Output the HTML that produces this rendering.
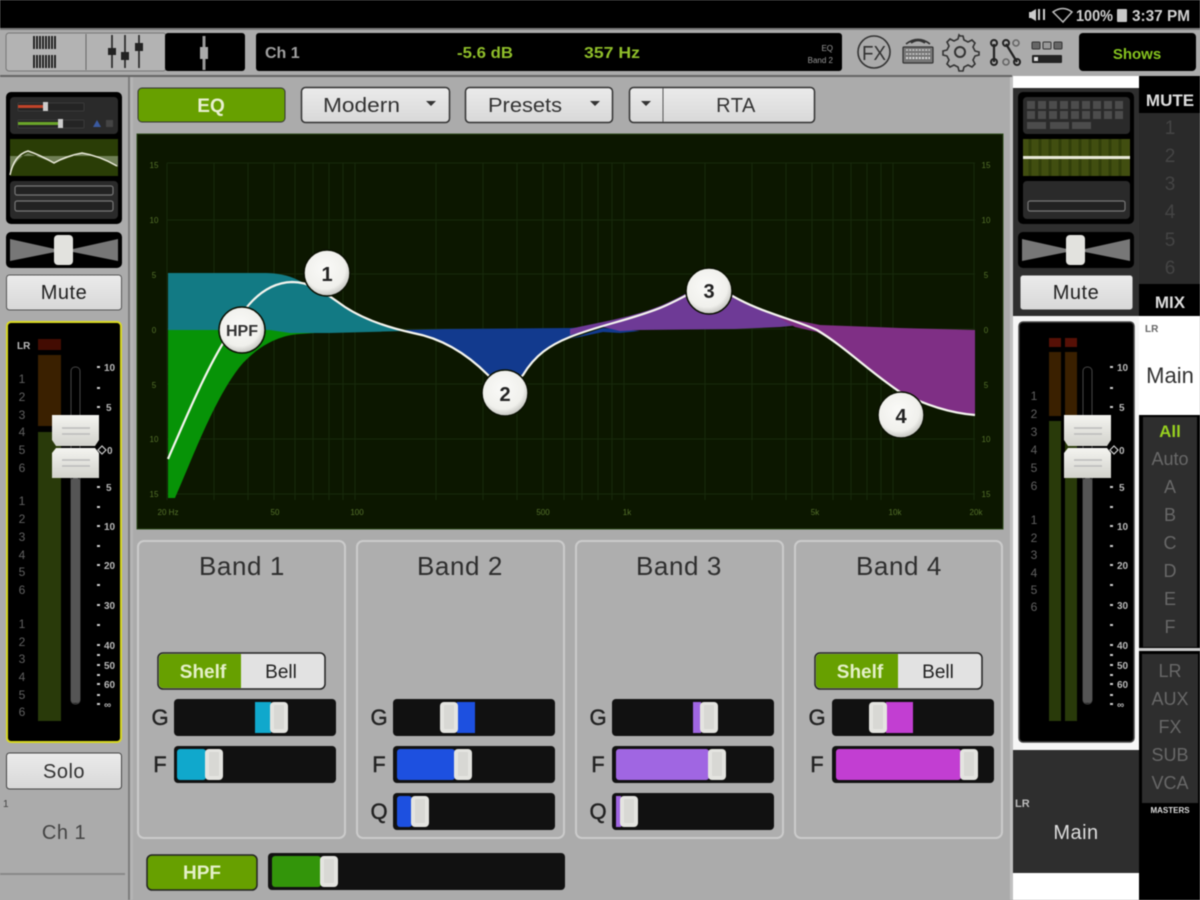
<!DOCTYPE html>
<html><head><meta charset="utf-8"><style>
html,body{margin:0;padding:0;background:#ababab;width:1200px;height:900px;overflow:hidden}
svg{display:block;filter:blur(.5px)}
text{font-family:"Liberation Sans",sans-serif}
</style></head><body>
<svg width="1200" height="900" viewBox="0 0 1200 900" xmlns="http://www.w3.org/2000/svg">
<defs>
<linearGradient id="btn" x1="0" y1="0" x2="0" y2="1"><stop offset="0" stop-color="#ebebeb"/><stop offset="1" stop-color="#d8d8d8"/></linearGradient>
<linearGradient id="cap" x1="0" y1="0" x2="0" y2="1"><stop offset="0" stop-color="#f4f4f0"/><stop offset="1" stop-color="#d2d2cc"/></linearGradient>
<radialGradient id="ball" cx=".45" cy=".4" r=".6"><stop offset="0" stop-color="#fafaf8"/><stop offset=".75" stop-color="#f0f0ec"/><stop offset="1" stop-color="#c4c4c0"/></radialGradient>
<g id="thumb"><rect x="0" y="0" width="18" height="31" rx="4" fill="#e4e4e0"/><rect x="4" y="3" width="10" height="24" fill="#d8d8d4"/></g>
<g id="cap2">
<path d="M0 0H47V25L43 31H4L0 25Z" fill="url(#cap)"/><path d="M10 13H38M10 19H38" stroke="#bbb" stroke-width="1.5"/>
<path d="M0 38L4 33H43L47 38V63H0Z" fill="url(#cap)"/><path d="M10 45H38M10 51H38" stroke="#bbb" stroke-width="1.5"/>
</g>
<g id="scale" fill="#b8b8b8" font-size="10" font-weight="bold">
<text x="-1" y="371">10</text><text x="1" y="411">5</text><text x="1" y="491">5</text><text x="-1" y="530">10</text><text x="-1" y="569">20</text><text x="-1" y="609">30</text><text x="-1" y="649">40</text><text x="-1" y="669">50</text><text x="-1" y="688">60</text><text x="-1" y="708">∞</text>
<path d="M-8 367h3M-8 388h3M-8 407h3M-8 487h3M-8 507h3M-8 526h3M-8 546h3M-8 565h3M-8 585h3M-8 605h3M-8 625h3M-8 645h3M-8 655h3M-8 665h3M-8 675h3M-8 684h3M-8 695h3M-8 704h3" stroke="#ccc" stroke-width="2"/>
</g>
<g id="bow"><path d="M4 7L49 17V20L4 29Z" fill="#777"/><path d="M112 7L67 17V20L112 29Z" fill="#777"/></g>
</defs>

<!-- base -->
<rect width="1200" height="900" fill="#ababab"/>
<rect width="1200" height="28" fill="#000"/>
<rect y="28" width="1200" height="2" fill="#7a7a7a"/>
<rect y="75" width="1012" height="2" fill="#666"/>
<rect x="128" y="77" width="2" height="823" fill="#7d7d7d"/>
<rect x="130" y="77" width="3" height="823" fill="#b4b4b4"/>
<rect x="1010" y="77" width="3" height="823" fill="#c0c0c0"/>

<!-- status bar -->
<path d="M1031 12l5-3v12l-5-3h-2v-6z" fill="#ccc"/><path d="M1039 9v11M1044 9v11" stroke="#ccc" stroke-width="2"/>
<path d="M1053 12q10-7 19 0l-9 10z" fill="none" stroke="#bbb" stroke-width="1.500"/>
<text x="1076" y="21" font-size="16" fill="#cfcfcf" font-weight="bold" textLength="37" lengthAdjust="spacingAndGlyphs">100%</text>
<rect x="1117" y="9" width="10" height="13" rx="1" fill="#c8c8c8"/>
<text x="1132" y="21" font-size="16" fill="#cfcfcf" font-weight="bold" textLength="58" lengthAdjust="spacingAndGlyphs">3:37 PM</text>

<!-- top tabs -->
<rect x="6" y="33" width="160" height="38" rx="3" fill="#b3b3b3" stroke="#777" stroke-width="1"/>
<path d="M86 34v36" stroke="#666"/>
<rect x="165" y="33" width="80" height="38" rx="3" fill="#000"/>
<path d="M34 36v13M37 36v13M40 36v13M43 36v13M46 36v13M49 36v13M52 36v13M55 36v13M34 55v13M37 55v13M40 55v13M43 55v13M46 55v13M49 55v13M52 55v13M55 55v13" stroke="#111" stroke-width="1.700"/>
<path d="M112 35v33M125 35v33M139 35v33" stroke="#222" stroke-width="1.600"/>
<rect x="108" y="48" width="8" height="7" fill="#222"/><rect x="121" y="52" width="8" height="8" fill="#222"/><rect x="135" y="43" width="8" height="8" fill="#222"/>
<path d="M204 36v34" stroke="#999" stroke-width="3"/><rect x="200" y="47" width="8" height="12" fill="#aaa"/>

<!-- display -->
<rect x="256" y="33" width="586" height="38" rx="3" fill="#000"/>
<text x="265" y="58" font-size="16" fill="#a0a0a0" font-weight="bold">Ch 1</text>
<text x="457" y="58" font-size="16" fill="#8fbe2a" textLength="56" font-weight="bold" lengthAdjust="spacingAndGlyphs">-5.6 dB</text>
<text x="584" y="58" font-size="16" fill="#8fbe2a" textLength="56" font-weight="bold" lengthAdjust="spacingAndGlyphs">357 Hz</text>
<text x="833" y="51" font-size="8" fill="#999" text-anchor="end">EQ</text>
<text x="833" y="63" font-size="8" fill="#999" text-anchor="end">Band 2</text>

<!-- icons -->
<circle cx="874" cy="52" r="16" fill="none" stroke="#333" stroke-width="1.600"/>
<text x="874" y="60" font-size="20" fill="#333" text-anchor="middle" textLength="24" lengthAdjust="spacingAndGlyphs">FX</text>
<g fill="none" stroke="#333">
<rect x="903" y="47" width="30" height="16" rx="1" fill="#777" stroke-width="1.200"/>
<path d="M906 50h24M906 54h24" stroke="#ddd" stroke-width="1.200" stroke-dasharray="2 1.200"/>
<path d="M906 58h24" stroke="#ddd" stroke-width="2" stroke-dasharray="2 1.200"/>
<path d="M906 44q12-9 24 0M911 43q7-5 14 0" stroke-width="1.600"/>
<path d="M960 37l3 0 1 4 4 2 4-2 3 3-2 4 2 4 4 1 0 3-4 1-2 4 2 4-3 3-4-2-4 2-1 4h-4l-1-4-4-2-4 2-3-3 2-4-2-4-4-1v-4l4-1 2-4-2-4 3-3 4 2 4-2 1-4z" stroke-width="1.600" transform="translate(0,-1)"/>
<circle cx="960" cy="52" r="5" stroke-width="2"/>
<path d="M994 44v18M1006 44l11 18" stroke="#222" stroke-width="2.200"/>
<circle cx="994" cy="43" r="3" stroke="#222" stroke-width="2"/><circle cx="994" cy="62" r="3" stroke="#222" stroke-width="2"/>
<circle cx="1006" cy="43" r="3" stroke="#222" stroke-width="2"/><circle cx="1016" cy="43" r="3" stroke="#666" stroke-width="1.600"/>
<circle cx="1006" cy="62" r="3" stroke="#666" stroke-width="1.600"/><circle cx="1017" cy="62" r="3" stroke="#222" stroke-width="2"/>
</g>
<rect x="1032" y="42" width="8" height="7" rx="1" fill="#666" stroke="#333"/><rect x="1043" y="42" width="8" height="7" rx="1" fill="#999" stroke="#333"/><rect x="1054" y="42" width="8" height="7" rx="1" fill="#666" stroke="#333"/>
<rect x="1032" y="55" width="30" height="8" rx="1" fill="#222"/><rect x="1034" y="57" width="4" height="4" fill="#ddd"/>

<rect x="1079" y="33" width="117" height="38" rx="4" fill="#000"/>
<text x="1137" y="59" font-size="15" fill="#86c41f" font-weight="bold" text-anchor="middle">Shows</text>

<!-- left mini panels -->
<rect x="6" y="92" width="116" height="132" rx="5" fill="#000"/>
<rect x="10" y="97" width="108" height="37" rx="4" fill="#2a2a2a"/>
<rect x="18" y="103" width="66" height="8" rx="1" fill="#242424" stroke="#3a3a3a"/><rect x="18" y="105" width="26" height="3" fill="#c0442a"/><rect x="43" y="102" width="5" height="9" fill="#ccc"/>
<rect x="18" y="120" width="66" height="8" rx="1" fill="#242424" stroke="#3a3a3a"/><rect x="18" y="122" width="41" height="3" fill="#6aa52a"/><rect x="58" y="119" width="5" height="9" fill="#ccc"/>
<path d="M97 120l4 7h-8z" fill="#3a5aa0"/><rect x="106" y="120" width="7" height="7" fill="#444"/>
<rect x="10" y="139" width="108" height="37" fill="#2a3d06"/>
<path d="M10 175Q14 160 28 153L54 163 82 153 100 158 118 167V156H10Z" fill="#6f7f55"/>
<path d="M10 175Q14 155 28 151Q40 155 54 163Q66 156 82 153Q100 156 117 166" fill="none" stroke="#e8e8d8" stroke-width="1.500"/>
<rect x="10" y="181" width="108" height="38" rx="4" fill="#2a2a2a"/>
<rect x="15" y="186" width="98" height="9" rx="2" fill="#222" stroke="#777" stroke-width="1.200"/>
<rect x="15" y="201" width="98" height="10" rx="2" fill="#222" stroke="#777" stroke-width="1.200"/>

<rect x="6" y="232" width="116" height="36" rx="5" fill="#000"/>
<use href="#bow" x="6" y="232"/>
<rect x="54" y="235" width="19" height="30" rx="4" fill="#e2e2de"/>

<rect x="6.500" y="275" width="115" height="35" rx="3" fill="url(#btn)" stroke="#555"/>
<text x="64" y="299" font-size="20" fill="#222" text-anchor="middle" letter-spacing=".5">Mute</text>

<!-- left fader -->
<rect x="7" y="322" width="114" height="420" rx="4" fill="#000" stroke="#d8d820" stroke-width="2"/>
<text x="17" y="349" font-size="10" fill="#bbb" font-weight="bold">LR</text>
<rect x="38" y="339" width="23" height="11" fill="#430c02"/>
<rect x="38" y="355" width="23" height="71" fill="#3a2000"/>
<rect x="38" y="432" width="23" height="289" fill="#293a0a"/>
<g font-size="12" fill="#606060" text-anchor="middle">
<text x="22" y="383">1</text><text x="22" y="401">2</text><text x="22" y="419">3</text><text x="22" y="436">4</text><text x="22" y="454">5</text><text x="22" y="472">6</text>
<text x="22" y="505">1</text><text x="22" y="523">2</text><text x="22" y="541">3</text><text x="22" y="559">4</text><text x="22" y="576">5</text><text x="22" y="594">6</text>
<text x="22" y="628">1</text><text x="22" y="646">2</text><text x="22" y="663">3</text><text x="22" y="681">4</text><text x="22" y="699">5</text><text x="22" y="716">6</text>
</g>
<rect x="71" y="367" width="9" height="337" rx="4" fill="#000" stroke="#444"/>
<rect x="71" y="478" width="9" height="225" rx="3" fill="#555"/>
<use href="#scale" x="105" y="0"/>
<path d="M98 450l4-4 4 4-4 4z" fill="none" stroke="#ccc" stroke-width="1.200"/>
<text x="107" y="454" font-size="10" fill="#b8b8b8" font-weight="bold">0</text>
<use href="#cap2" x="52" y="415"/>

<rect x="6.500" y="753" width="115" height="36" rx="3" fill="url(#btn)" stroke="#444"/>
<text x="64" y="778" font-size="20" fill="#333" text-anchor="middle" letter-spacing=".5">Solo</text>
<text x="3" y="807" font-size="10" fill="#444">1</text>
<text x="64" y="839" font-size="20" fill="#444" text-anchor="middle" letter-spacing=".5">Ch 1</text>
<rect y="873" width="125" height="2" fill="#888"/>

<!-- eq buttons -->
<rect x="138" y="88" width="147" height="34" rx="4" fill="#67a000" stroke="#333"/>
<text x="211" y="112" font-size="19" fill="#e8f0d0" text-anchor="middle" font-weight="bold">EQ</text>
<rect x="301.500" y="87.500" width="148" height="35" rx="4" fill="url(#btn)" stroke="#333" stroke-width="1.500"/>
<text x="323" y="112" font-size="20" fill="#333" textLength="77" lengthAdjust="spacingAndGlyphs">Modern</text>
<path d="M426 101h10l-5 5z" fill="#333"/>
<rect x="465.500" y="87.500" width="147" height="35" rx="4" fill="url(#btn)" stroke="#333" stroke-width="1.500"/>
<text x="488" y="112" font-size="20" fill="#333" textLength="74" lengthAdjust="spacingAndGlyphs">Presets</text>
<path d="M590 101h10l-5 5z" fill="#333"/>
<rect x="629.500" y="87.500" width="185" height="35" rx="4" fill="url(#btn)" stroke="#333" stroke-width="1.500"/>
<path d="M663 88v34" stroke="#555"/>
<path d="M641 101h10l-5 5z" fill="#333"/>
<text x="736" y="112" font-size="20" fill="#333" text-anchor="middle" letter-spacing=".5">RTA</text>

<!-- graph -->
<rect x="137" y="134" width="866" height="395" fill="#0c1700"/>
<rect x="137" y="134" width="866" height="395" fill="none" stroke="#2c4a1a" stroke-width="1"/>
<g stroke="#172a0b" stroke-width="1" fill="none">
<path d="M167 163V500M214 163V500M248 163V500M274 163V500M295 163V500M313 163V500M329 163V500M343 163V500M355 163V500M436 163V500M483 163V500M517 163V500M543 163V500M564 163V500M582 163V500M598 163V500M612 163V500M624 163V500M705 163V500M752 163V500M786 163V500M812 163V500M833 163V500M851 163V500M867 163V500M881 163V500M893 163V500M974 163V500"/>
<path d="M167 163H975M167 220H975M167 274H975M167 329H975M167 384H975M167 439H975M167 494H975"/>
</g>
<g font-size="8" fill="#55722a" text-anchor="middle">
<text x="154" y="168">15</text><text x="154" y="223">10</text><text x="154" y="278">5</text><text x="154" y="333">0</text><text x="154" y="388">5</text><text x="154" y="442">10</text><text x="154" y="497">15</text>
<text x="986" y="168">15</text><text x="986" y="223">10</text><text x="986" y="278">5</text><text x="986" y="333">0</text><text x="986" y="388">5</text><text x="986" y="442">10</text><text x="986" y="497">15</text>
<text x="168" y="515">20 Hz</text><text x="275" y="515">50</text><text x="357" y="515">100</text><text x="543" y="515">500</text><text x="627" y="515">1k</text><text x="815" y="515">5k</text><text x="895" y="515">10k</text><text x="976" y="515">20k</text>
</g>
<!-- fills -->
<path d="M168 330V498H175C190 465 215 395 243 363C260 345 280 335 300 334L330 332 345 330Z" fill="#079307"/>
<path d="M168 330V273H263C280 273 290 276 300 281L327 295C335 298 340 303 345 307C365 320 385 326 405 331L330 333 290 333 270 330Z" fill="#127a84"/>
<path d="M400 330L445 329 570 328 603 326 570 337C550 345 535 355 523 375L505 395 488 375C465 352 440 338 413 333Z" fill="#123a8e"/>
<path d="M570 339L603 328 640 331 620 333 603 332Z" fill="#123a8e"/>
<path d="M570 329C600 322 630 318 660 306C680 298 695 287 709 284C720 286 728 292 740 299C765 312 785 318 800 325L780 327 735 329 640 330 620 331 603 327 570 335Z" fill="#6e3a96"/>
<path d="M770 313L795 320 820 325 900 328 975 330V415C950 413 925 405 900 392C870 372 845 347 817 332L795 327Z" fill="#7f2f85"/>
<!-- curve -->
<path d="M168 459C185 420 205 372 225 340C240 315 258 283 292 282C312 282 325 293 345 307C365 320 390 328 413 333C440 338 465 352 488 375L505 393 523 375C535 355 550 345 570 337C600 325 630 320 660 308C680 300 695 289 709 286C720 288 728 294 740 300C765 313 795 320 817 330C845 347 870 372 900 392C925 405 950 413 975 415" fill="none" stroke="#f4f4ee" stroke-width="2.200" stroke-linejoin="round"/>
<!-- nodes -->
<g fill="url(#ball)" stroke="#0a1002" stroke-width="1.500">
<circle cx="327" cy="273" r="23"/><circle cx="242" cy="330" r="23"/><circle cx="505" cy="393" r="23"/><circle cx="709" cy="291" r="23"/><circle cx="901" cy="415" r="23"/>
</g>
<g fill="#222" text-anchor="middle" font-weight="bold">
<text x="327" y="281" font-size="20">1</text>
<text x="242" y="336" font-size="16" fill="#333">HPF</text>
<text x="505" y="401" font-size="20">2</text>
<text x="709" y="298" font-size="20">3</text>
<text x="901" y="423" font-size="20">4</text>
</g>

<!-- band panels -->
<g fill="#aeaeae" stroke="#cbcbcb" stroke-width="2">
<rect x="138" y="541" width="207" height="297" rx="6"/>
<rect x="357" y="541" width="207" height="297" rx="6"/>
<rect x="576" y="541" width="207" height="297" rx="6"/>
<rect x="795" y="541" width="207" height="297" rx="6"/>
</g>
<g font-size="26" fill="#2e2e2e" text-anchor="middle" letter-spacing=".6">
<text x="242" y="575">Band 1</text><text x="460" y="575">Band 2</text><text x="679" y="575">Band 3</text><text x="899" y="575">Band 4</text>
</g>

<!-- shelf/bell -->
<rect x="158" y="653" width="167" height="36" rx="5" fill="#e2e2e2" stroke="#222" stroke-width="1.500"/>
<path d="M241 654H163a4 4 0 0 0-4 4v26a4 4 0 0 0 4 4h78z" fill="#67a000"/>
<text x="203" y="678" font-size="19" fill="#e4f0c8" text-anchor="middle" font-weight="bold">Shelf</text>
<text x="281" y="678" font-size="19" fill="#222" text-anchor="middle">Bell</text>
<rect x="815" y="653" width="167" height="36" rx="5" fill="#e2e2e2" stroke="#222" stroke-width="1.500"/>
<path d="M898 654H820a4 4 0 0 0-4 4v26a4 4 0 0 0 4 4h78z" fill="#67a000"/>
<text x="860" y="678" font-size="19" fill="#e4f0c8" text-anchor="middle" font-weight="bold">Shelf</text>
<text x="938" y="678" font-size="19" fill="#222" text-anchor="middle">Bell</text>

<!-- slider tracks -->
<g fill="#111">
<rect x="174" y="699" width="162" height="37" rx="4"/><rect x="174" y="746" width="162" height="37" rx="4"/>
<rect x="393" y="699" width="162" height="37" rx="4"/><rect x="393" y="746" width="162" height="37" rx="4"/><rect x="393" y="793" width="162" height="37" rx="4"/>
<rect x="612" y="699" width="162" height="37" rx="4"/><rect x="612" y="746" width="162" height="37" rx="4"/><rect x="612" y="793" width="162" height="37" rx="4"/>
<rect x="832" y="699" width="162" height="37" rx="4"/><rect x="832" y="746" width="162" height="37" rx="4"/>
<rect x="268" y="853" width="297" height="37" rx="4"/>
</g>
<rect x="255" y="702" width="16" height="31" fill="#10a8cc"/><rect x="177" y="749" width="29" height="31" rx="3" fill="#10a8cc"/>
<rect x="457" y="702" width="18" height="31" fill="#1d50e0"/><rect x="397" y="749" width="58" height="31" rx="3" fill="#1d50e0"/><rect x="397" y="796" width="15" height="31" rx="3" fill="#1d50e0"/>
<rect x="693" y="702" width="8" height="31" fill="#a066e2"/><rect x="616" y="749" width="93" height="31" rx="3" fill="#a066e2"/><rect x="616" y="796" width="5" height="31" fill="#a066e2"/>
<rect x="886" y="702" width="27" height="31" fill="#c23ed2"/><rect x="836" y="749" width="125" height="31" rx="3" fill="#c23ed2"/>
<rect x="272" y="856" width="49" height="31" rx="3" fill="#33950a"/>
<use href="#thumb" x="270" y="702"/><use href="#thumb" x="205" y="749"/>
<use href="#thumb" x="440" y="702"/><use href="#thumb" x="454" y="749"/><use href="#thumb" x="411" y="796"/>
<use href="#thumb" x="700" y="702"/><use href="#thumb" x="708" y="749"/><use href="#thumb" x="620" y="796"/>
<use href="#thumb" x="869" y="702"/><use href="#thumb" x="960" y="749"/>
<use href="#thumb" x="320" y="856"/>
<g font-size="22" fill="#222" stroke="#222" stroke-width=".4" text-anchor="middle">
<text x="160" y="725">G</text><text x="160" y="772">F</text>
<text x="379" y="725">G</text><text x="379" y="772">F</text><text x="379" y="819">Q</text>
<text x="598" y="725">G</text><text x="598" y="772">F</text><text x="598" y="819">Q</text>
<text x="817" y="725">G</text><text x="817" y="772">F</text>
</g>

<!-- hpf -->
<rect x="147" y="855" width="110" height="35" rx="5" fill="#67a000" stroke="#222" stroke-width="1.500"/>
<text x="202" y="879" font-size="19" fill="#e4f0c8" text-anchor="middle" font-weight="bold">HPF</text>

<!-- right strip -->
<rect x="1013" y="76" width="126" height="12" fill="#fff"/>
<rect x="1013" y="88" width="126" height="228" fill="#2e2e2e"/>
<rect x="1013" y="316" width="126" height="434" fill="#f6f6f6"/>
<rect x="1018" y="92" width="116" height="132" rx="5" fill="#000"/>
<rect x="1023" y="97" width="107" height="37" rx="4" fill="#2a2a2a"/>
<g fill="#4c4c4c">
<rect x="1027" y="101" width="8" height="8"/><rect x="1038" y="101" width="8" height="8"/><rect x="1049" y="101" width="8" height="8"/><rect x="1060" y="101" width="8" height="8"/><rect x="1071" y="101" width="8" height="8"/><rect x="1082" y="101" width="8" height="8"/><rect x="1093" y="101" width="8" height="8"/><rect x="1104" y="101" width="8" height="8"/><rect x="1115" y="101" width="8" height="8"/>
<rect x="1027" y="111" width="8" height="8"/><rect x="1038" y="111" width="8" height="8"/><rect x="1049" y="111" width="8" height="8"/><rect x="1060" y="111" width="8" height="8"/><rect x="1071" y="111" width="8" height="8"/><rect x="1082" y="111" width="8" height="8"/><rect x="1093" y="111" width="8" height="8"/><rect x="1104" y="111" width="8" height="8"/><rect x="1115" y="111" width="8" height="8"/>
<rect x="1027" y="122" width="19" height="7"/><rect x="1050" y="122" width="19" height="7"/><rect x="1072" y="122" width="19" height="7"/>
</g>
<rect x="1023" y="139" width="107" height="37" fill="#414e10"/>
<path d="M1030 139v37M1040 139v37M1050 139v37M1060 139v37M1070 139v37M1080 139v37M1090 139v37M1100 139v37M1110 139v37M1120 139v37" stroke="#323f0a" stroke-width="3"/>
<rect x="1023" y="156" width="107" height="3" fill="#e8e8d8"/>
<rect x="1023" y="181" width="107" height="38" rx="4" fill="#2a2a2a"/>
<rect x="1028" y="201" width="97" height="10" rx="2" fill="#222" stroke="#777" stroke-width="1.200"/>
<rect x="1018" y="232" width="116" height="36" rx="5" fill="#000"/>
<use href="#bow" x="1018" y="232"/>
<rect x="1066" y="235" width="19" height="30" rx="4" fill="#e2e2de"/>
<rect x="1020" y="275" width="113" height="35" rx="3" fill="url(#btn)" stroke="#333"/>
<text x="1076" y="299" font-size="20" fill="#222" text-anchor="middle" letter-spacing=".5">Mute</text>

<rect x="1019" y="322" width="115" height="420" rx="4" fill="#000" stroke="#444" stroke-width="1.500"/>
<rect x="1049" y="338" width="12" height="9" fill="#561006"/><rect x="1065" y="338" width="12" height="9" fill="#561006"/>
<rect x="1049" y="352" width="12" height="64" fill="#3a2000"/><rect x="1065" y="352" width="12" height="64" fill="#3a2000"/>
<rect x="1049" y="421" width="12" height="300" fill="#293a0a"/><rect x="1065" y="421" width="12" height="300" fill="#293a0a"/>
<g font-size="12" fill="#606060" text-anchor="middle">
<text x="1034" y="400">1</text><text x="1034" y="418">2</text><text x="1034" y="436">3</text><text x="1034" y="454">4</text><text x="1034" y="472">5</text><text x="1034" y="490">6</text>
<text x="1034" y="524">1</text><text x="1034" y="542">2</text><text x="1034" y="559">3</text><text x="1034" y="577">4</text><text x="1034" y="594">5</text><text x="1034" y="611">6</text>
</g>
<rect x="1083" y="367" width="9" height="337" rx="4" fill="#000" stroke="#444"/>
<rect x="1083" y="478" width="9" height="225" rx="3" fill="#555"/>
<use href="#scale" x="1118" y="0"/>
<path d="M1110 450l4-4 4 4-4 4z" fill="none" stroke="#ccc" stroke-width="1.200"/>
<text x="1119" y="454" font-size="10" fill="#b8b8b8" font-weight="bold">0</text>
<use href="#cap2" x="1064" y="415"/>

<rect x="1013" y="750" width="126" height="123" fill="#2e2e2e"/>
<rect x="1013" y="873" width="126" height="27" fill="#fff"/>
<text x="1015" y="807" font-size="11" fill="#bbb" font-weight="bold">LR</text>
<text x="1076" y="839" font-size="20" fill="#ddd" text-anchor="middle" letter-spacing=".5">Main</text>

<!-- right column -->
<rect x="1139" y="76" width="61" height="824" fill="#000"/>
<rect x="1139" y="113" width="61" height="171" fill="#2a2a2a"/>
<text x="1170" y="106" font-size="17" fill="#ddd" font-weight="bold" text-anchor="middle">MUTE</text>
<g font-size="19" fill="#444" text-anchor="middle">
<text x="1170" y="134">1</text><text x="1170" y="162">2</text><text x="1170" y="190">3</text><text x="1170" y="218">4</text><text x="1170" y="246">5</text><text x="1170" y="274">6</text>
</g>
<text x="1170" y="308" font-size="17" fill="#ddd" font-weight="bold" text-anchor="middle">MIX</text>
<rect x="1139" y="316" width="61" height="99" fill="#fff"/>
<text x="1145" y="332" font-size="10" fill="#666" font-weight="bold">LR</text>
<text x="1170" y="383" font-size="22" fill="#333" text-anchor="middle">Main</text>
<rect x="1139" y="415" width="61" height="237" fill="#000"/>
<rect x="1143" y="417" width="54" height="230" fill="#2e2e2e"/>
<text x="1170" y="437" font-size="17" fill="#98d020" font-weight="bold" text-anchor="middle">All</text>
<g font-size="18" fill="#686868" text-anchor="middle">
<text x="1170" y="465">Auto</text><text x="1170" y="493">A</text><text x="1170" y="521">B</text><text x="1170" y="549">C</text><text x="1170" y="577">D</text><text x="1170" y="605">E</text><text x="1170" y="633">F</text>
</g>
<rect x="1139" y="648" width="61" height="3" fill="#ccc"/>
<rect x="1142" y="654" width="56" height="149" fill="#2e2e2e"/>
<g font-size="18" fill="#686868" text-anchor="middle">
<text x="1170" y="677">LR</text><text x="1170" y="705">AUX</text><text x="1170" y="733">FX</text><text x="1170" y="761">SUB</text><text x="1170" y="789">VCA</text>
</g>
<text x="1170" y="813" font-size="8" fill="#ddd" font-weight="bold" text-anchor="middle">MASTERS</text>
</svg>
</body></html>
